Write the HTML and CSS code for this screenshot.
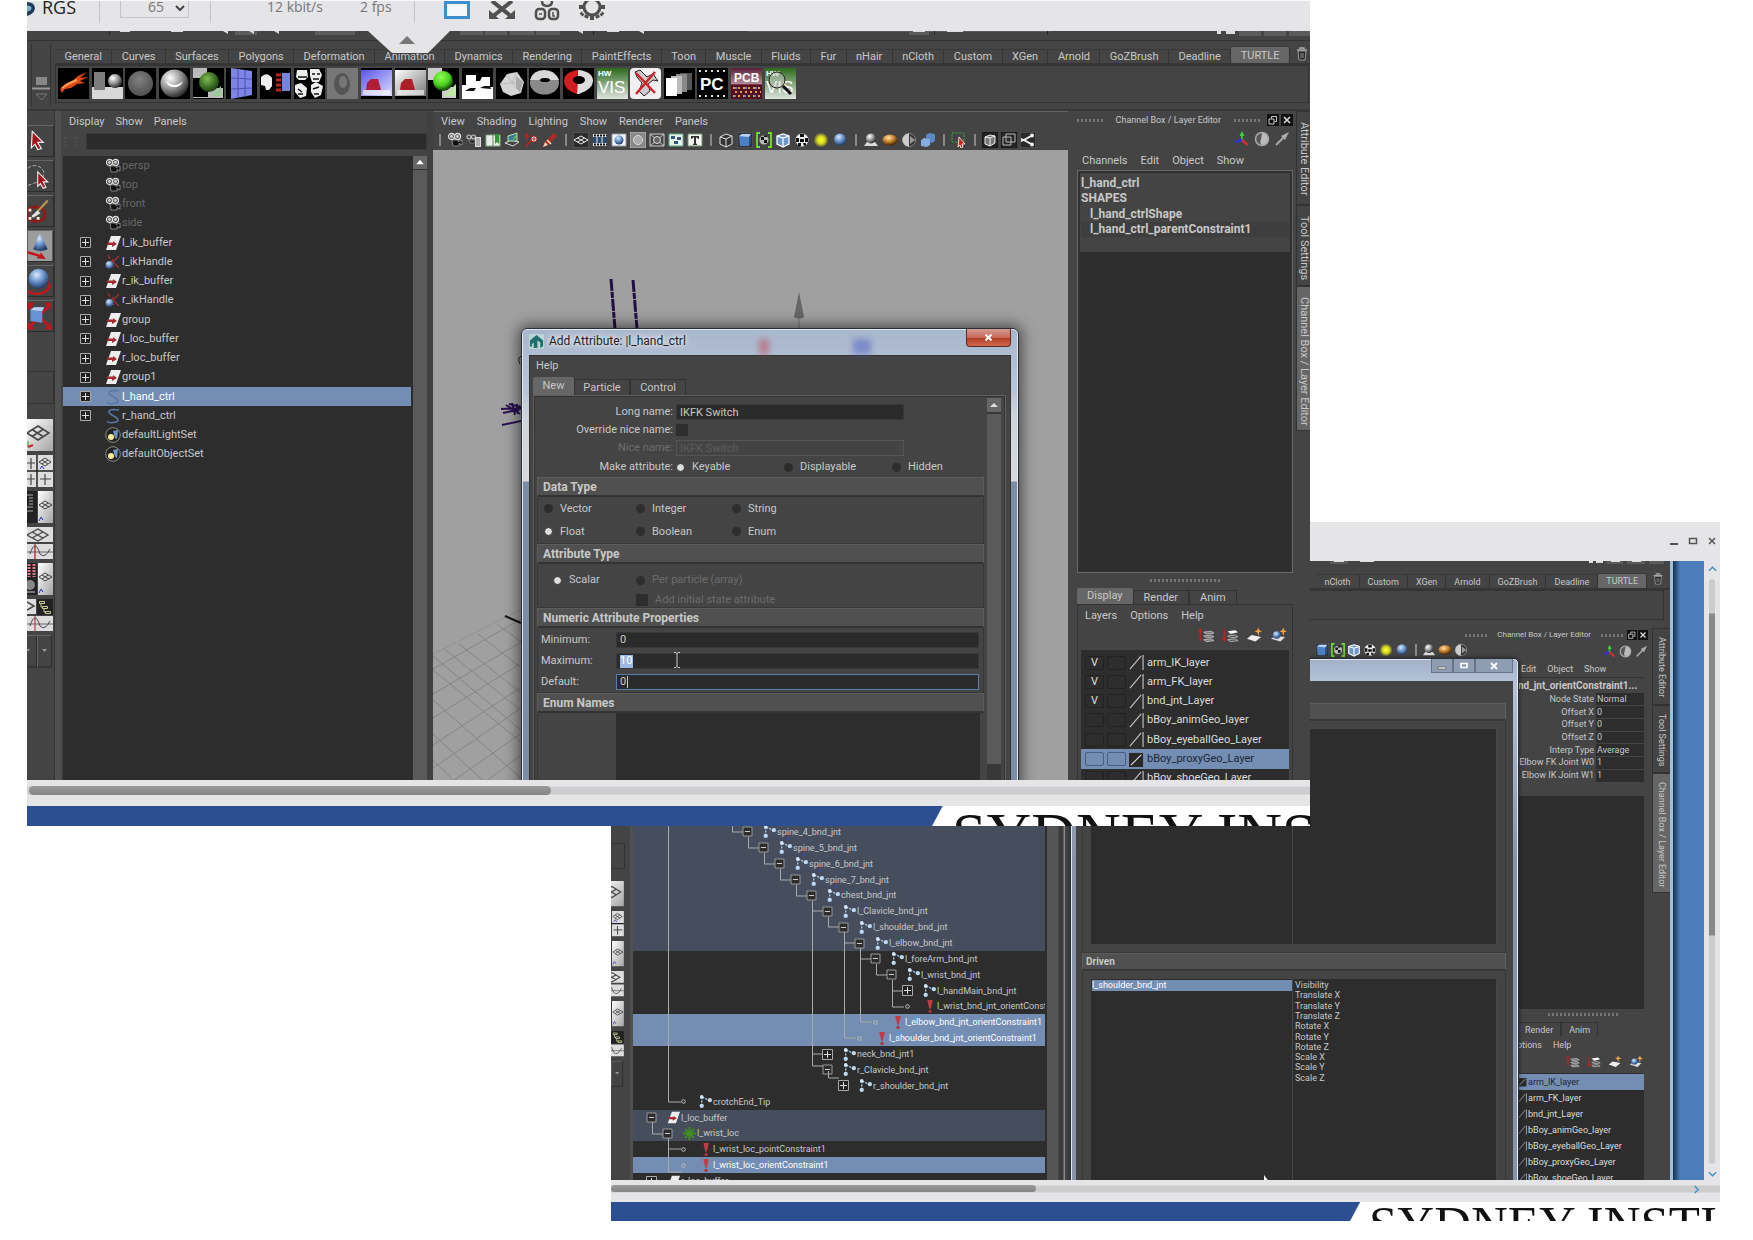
FILE: index.html
```html
<!DOCTYPE html>
<html lang="en">
<head>
<meta charset="utf-8">
<title>Add Attribute and Set Driven Key</title>
<link rel="stylesheet" href="styles.css">
</head>
<body>
<svg class="defs" aria-hidden="true">
<defs>
<radialGradient id="gSteel" cx=".35" cy=".3" r=".75"><stop offset="0" stop-color="#fff"/><stop offset=".5" stop-color="#999"/><stop offset="1" stop-color="#222"/></radialGradient>
<radialGradient id="gBlue" cx=".4" cy=".3" r=".7"><stop offset="0" stop-color="#dbe9fb"/><stop offset=".5" stop-color="#6d96cf"/><stop offset="1" stop-color="#223c66"/></radialGradient>
<radialGradient id="gOrange" cx=".4" cy=".3" r=".7"><stop offset="0" stop-color="#ffe2b0"/><stop offset=".5" stop-color="#c8842c"/><stop offset="1" stop-color="#432503"/></radialGradient>
<radialGradient id="gSun"><stop offset="0" stop-color="#ffff30"/><stop offset=".5" stop-color="#d8d820"/><stop offset="1" stop-color="#d8d820" stop-opacity="0"/></radialGradient>
<radialGradient id="gGreen" cx=".4" cy=".35" r=".7"><stop offset="0" stop-color="#7dbb50"/><stop offset="1" stop-color="#123a08"/></radialGradient>
<radialGradient id="gMatte" cx=".45" cy=".35" r=".7"><stop offset="0" stop-color="#808080"/><stop offset="1" stop-color="#4c4c4c"/></radialGradient>
<radialGradient id="gLime" cx=".4" cy=".3" r=".7"><stop offset="0" stop-color="#8cff50"/><stop offset=".6" stop-color="#4cd020"/><stop offset="1" stop-color="#0c3a04"/></radialGradient>
<linearGradient id="gVis" x2="0" y2="1"><stop offset="0" stop-color="#2c6a1c"/><stop offset="1" stop-color="#e0e4e0"/></linearGradient>
<linearGradient id="gPcb" x2="0" y2="1"><stop offset="0" stop-color="#5a2038"/><stop offset=".5" stop-color="#b08a98"/><stop offset=".55" stop-color="#581020"/><stop offset="1" stop-color="#501020"/></linearGradient>
<linearGradient id="gRoom" x2="1" y2="1"><stop offset="0" stop-color="#fff"/><stop offset="1" stop-color="#777"/></linearGradient>
<linearGradient id="gRoomB" x2="1" y2="1"><stop offset="0" stop-color="#5a55e8"/><stop offset="1" stop-color="#dcdcff"/></linearGradient>
<linearGradient id="gKey" x2="1" y2="1"><stop offset="0" stop-color="#fff"/><stop offset="1" stop-color="#a4a4a4"/></linearGradient>

<symbol id="cam" viewBox="0 0 16 16"><g fill="none" stroke="#ddd" stroke-width="1.300"><circle cx="4.500" cy="4.500" r="3"/><circle cx="10.500" cy="4.500" r="3"/><circle cx="4.500" cy="4.500" r=".8"/><circle cx="10.500" cy="4.500" r=".8"/></g><path d="M5 8h6v1.500l4-1.500v5l-3-1.500v2.500H6z" fill="#111" stroke="#aaa" stroke-width=".7"/></symbol>
<symbol id="camlist" viewBox="0 0 16 16"><g fill="none" stroke="#ccc" stroke-width="1.200"><circle cx="3" cy="5" r="2"/><circle cx="7.500" cy="5" r="2"/></g><path d="M3 8h6v3H4z" fill="#222" stroke="#999" stroke-width=".6"/><path d="M9 5h6v10H9z" fill="#ddd"/><path d="M10 7h4M10 9h4M10 11h4M10 13h4" stroke="#666" stroke-width=".8"/></symbol>
<symbol id="book" viewBox="0 0 16 16"><path d="M1 3h14v11H1z" fill="#e8eee8" stroke="#8a8" /><path d="M8 3v11" stroke="#777"/><path d="M10 2h4v10l-2-2-2 2z" fill="#2e9a2e"/></symbol>
<symbol id="plane" viewBox="0 0 16 16"><path d="M1 11l6-3 8 2-6 4z" fill="none" stroke="#ddd"/><path d="M4 9V4l9-3v8z" fill="#3a7a9a" stroke="#bfe3a4"/><path d="M8 8l4-2V3z" fill="#6c3"/></symbol>
<symbol id="pins" viewBox="0 0 16 16"><path d="M4 1v7M1 4h6M3 15l5-7" stroke="#b22" stroke-width="1.500"/><circle cx="11" cy="7" r="3" fill="#fff" stroke="#a22"/><path d="M9 7h4M11 5v4" stroke="#a22"/></symbol>
<symbol id="pencil" viewBox="0 0 16 16"><path d="M1 15l2-5L12 1l3 3-9 9z" fill="#b02a22"/><path d="M3 10l3 3-5 2z" fill="#eed2b0"/><path d="M5 8l4 4" stroke="#eec" stroke-width="1.500"/></symbol>
<symbol id="gridp" viewBox="0 0 16 16"><path d="M0 0h16v16H0z" fill="#2b2b2b" stroke="#777"/><path d="M1 8l7-4 7 4-7 4zM4.500 6l7 4M11.500 6l-7 4" fill="none" stroke="#eee"/></symbol>
<symbol id="film" viewBox="0 0 16 16"><path d="M1 2h14v12H1z" fill="#dfe6ee"/><path d="M1 5h14v6H1z" fill="#2b4a70"/><path d="M2 3.500h13M2 12.500h13" stroke="#111" stroke-width="2" stroke-dasharray="2 1"/><path d="M5 5v6M10 5v6" stroke="#dfe6ee"/></symbol>
<symbol id="gate" viewBox="0 0 16 16"><path d="M1 2h14v12H1z" fill="#f2f6fa" stroke="#99a"/><circle cx="8" cy="8" r="4.500" fill="url(#gBlue)"/></symbol>
<symbol id="gateg" viewBox="0 0 16 16"><path d="M0 0h16v16H0z" fill="#888" stroke="#bbb"/><circle cx="8" cy="8" r="4.500" fill="#aaa" stroke="#ddd"/></symbol>
<symbol id="xbox" viewBox="0 0 16 16"><path d="M1 2h14v12H1zM1 2l14 12M15 2L1 14" fill="none" stroke="#ccc"/><circle cx="8" cy="8" r="3.500" fill="#666" stroke="#ddd"/></symbol>
<symbol id="dots" viewBox="0 0 16 16"><path d="M1 2h14v12H1z" fill="#e6f0ea" stroke="#6a8"/><path d="M3 4h4v3H3zM9 5h4v3H9zM6 9h4v3H6z" fill="#357"/></symbol>
<symbol id="tbox" viewBox="0 0 16 16"><path d="M1 2h14v12H1z" fill="#f4f6f0" stroke="#797"/><path d="M4 4h8v3h-1l-1-1.500H9v6l1 .5v1H6v-1l1-.5v-6H6L5 7H4z" fill="#333"/></symbol>
<symbol id="cube" viewBox="0 0 16 16"><path d="M2 5l6-3 6 2v8l-6 3-6-3zM2 5l6 2v8M8 7l6-3" fill="#333" stroke="#ddd"/></symbol>
<symbol id="cubeb" viewBox="0 0 16 16"><path d="M0 0h16v16H0z" fill="#333" stroke="#667"/><path d="M2 4l3-2h9l-2 3v9H3z" fill="#4c7fc4"/><path d="M2 4l3-2h9l-2 3z" fill="#b7d1f4"/><path d="M12 5l2-3v9l-2 3z" fill="#28508a"/></symbol>
<symbol id="cubew" viewBox="0 0 16 16"><path d="M2 4l6-2 6 2v8l-6 3-6-3z" fill="#6c96cc" stroke="#fff" stroke-width="1.300"/><path d="M2 4l6 2 6-2M8 6v9" fill="none" stroke="#fff" stroke-width="1.300"/></symbol>
<symbol id="brk" viewBox="0 0 16 16"><path d="M4 1H1v14h3M12 1h3v14h-3" fill="none" stroke="#6fe02c" stroke-width="1.800"/><circle cx="8" cy="8" r="4.500" fill="#bbb"/><path d="M5 5h3v3H5zM8 8h3v3H8zM8 3.500h3V5H8z" fill="#111"/></symbol>
<symbol id="chk" viewBox="0 0 16 16"><circle cx="8" cy="8" r="6.500" fill="#eee"/><path d="M6 2h4v3H6zM2 6h3v4H2zM11 6h3v4h-3zM6 7h4v3H6zM4 11h3v3H4zM9 11h3v2l-2 1z" fill="#111"/></symbol>
<symbol id="sun" viewBox="0 0 16 16"><circle cx="8" cy="8" r="7.500" fill="url(#gSun)"/></symbol>
<symbol id="ball" viewBox="0 0 16 16"><circle cx="8" cy="7.500" r="6" fill="url(#gBlue)"/></symbol>
<symbol id="lamp" viewBox="0 0 16 16"><path d="M1 14l3-4h8l3 4z" fill="#ddd"/><circle cx="8" cy="6.500" r="5" fill="url(#gSteel)"/></symbol>
<symbol id="orng" viewBox="0 0 16 16"><ellipse cx="8" cy="8" rx="7.500" ry="5.500" fill="url(#gOrange)"/></symbol>
<symbol id="half" viewBox="0 0 16 16"><circle cx="8" cy="8" r="6.500" fill="#333" stroke="#888"/><path d="M8 1.500a6.500 6.500 0 0 0 0 13z" fill="#ccc"/><path d="M9 4l5 4-5 4z" fill="#999"/></symbol>
<symbol id="cubes" viewBox="0 0 16 16"><path d="M6 3l3-2 6 1v7l-3 2-6-1z" fill="#5b87c4"/><path d="M1 8l3-2 6 1v6l-3 2-6-1z" fill="#86abdf"/></symbol>
<symbol id="selr" viewBox="0 0 16 16"><path d="M1 1h12v9H1z" fill="none" stroke="#3bb23b" stroke-dasharray="2 1.500"/><path d="M8 5l6 7-3 0 1 3-2 1-1-3-2 2z" fill="#c22" stroke="#fff" stroke-width=".8"/></symbol>
<symbol id="kbox" viewBox="0 0 16 16"><path d="M0 0h16v16H0z" fill="#222" stroke="#111"/><path d="M3 5l5-2 5 1v7l-5 3-5-2zM3 5l5 1v8M8 6l5-2" fill="#777" stroke="#eee"/></symbol>
<symbol id="ksq" viewBox="0 0 16 16"><path d="M0 0h16v16H0z" fill="#262626" stroke="#111"/><path d="M2 5h8v8H2zM5 2h9v8H5z" fill="none" stroke="#bbb"/></symbol>
<symbol id="kcut" viewBox="0 0 16 16"><path d="M0 0h16v16H0z" fill="#2a2a2a" stroke="#666"/><path d="M12 3.500L4 8l8 4.500" stroke="#eee" stroke-width="2" fill="none"/><path d="M1 6l5 2-5 2z" fill="#eee"/><circle cx="12" cy="3.500" r="2" fill="#eee"/><circle cx="12" cy="12.500" r="2" fill="#eee"/></symbol>

<symbol id="axis" viewBox="0 0 16 16"><path d="M8 9V2" stroke="#3b3" stroke-width="2"/><path d="M8 0l2.500 5h-5z" fill="#4c4"/><path d="M8 9L1 11" stroke="#33d" stroke-width="2.500"/><path d="M8 9l6 5" stroke="#c33" stroke-width="2.500"/></symbol>
<symbol id="moon" viewBox="0 0 16 16"><circle cx="8" cy="8" r="6.500" fill="#555" stroke="#aaa" stroke-width="1.500"/><path d="M8 2a6 6 0 0 1 0 12q-3-2-1-6z" fill="#bbb"/></symbol>
<symbol id="arr" viewBox="0 0 16 16"><path d="M2 14L12 4" stroke="#aaa" stroke-width="1.800"/><path d="M15 1L7 5l4 4z" fill="#aaa"/></symbol>
<symbol id="restore" viewBox="0 0 12 12"><path d="M0 0h12v12H0z" fill="#111"/><path d="M2 5h5v5H2zM4.500 4.500v-2h5v5h-2" fill="none" stroke="#ccc"/></symbol>
<symbol id="close" viewBox="0 0 12 12"><path d="M0 0h12v12H0z" fill="#111"/><path d="M3 3l6 6M9 3L3 9" stroke="#ddd" stroke-width="1.500"/></symbol>
<symbol id="trash" viewBox="0 0 14 16"><path d="M2 4h10M5 3V2h4v1" stroke="#aaa" stroke-width="1.500" fill="none"/><path d="M3 5h8l-1 9H4z" fill="#222" stroke="#999"/><path d="M6 7v5M8 7v5" stroke="#999"/></symbol>

<symbol id="grp" viewBox="0 0 16 16"><path d="M6 1h10l-5 14H1z" fill="#eee"/><path d="M2 7.500h6V6l4 3-5 3v-2H2z" fill="#a32a34"/></symbol>
<symbol id="ikh" viewBox="0 0 16 16"><path d="M3 1l2 4M14 2L8 8l6 6" stroke="#a33" stroke-width="1.200" fill="none"/><path d="M8 5l-2 4 3 4" stroke="#c33" fill="none"/><circle cx="4.500" cy="11" r="4" fill="url(#gBlue)"/></symbol>
<symbol id="crv" viewBox="0 0 16 16"><path d="M14 2C4 0 1 4 7 7s8 6 4 7-8 1-9-1" fill="none" stroke="#5878a4" stroke-width="1.500"/></symbol>
<symbol id="set" viewBox="0 0 16 16"><circle cx="8" cy="8" r="7.300" fill="#222" stroke="#8d8d7d"/><path d="M8 4l5-1-1 9-2-1z" fill="#6f95c9"/><circle cx="6" cy="10" r="3" fill="#f5eb9a"/></symbol>
<symbol id="jnt" viewBox="0 0 12 12"><path d="M2.500 2v8M3 2l7 3" stroke="#9fc3e2" stroke-width="1.300" stroke-dasharray="2 1"/><circle cx="2.500" cy="1.800" r="1.700" fill="#d4e8f8"/><circle cx="2.500" cy="10" r="2" fill="#b9daf2"/><circle cx="10" cy="4.800" r="2" fill="#b9daf2"/></symbol>
<symbol id="con" viewBox="0 0 12 12"><path d="M4 0h5L7.200 8H5.800z" fill="#c23a44"/><circle cx="6.500" cy="10.500" r="1.500" fill="#b2303a"/></symbol>
<symbol id="loc" viewBox="0 0 12 12"><path d="M6 0v12M0 6h12M2 2l8 8M10 2l-8 8" stroke="#3f8f1f" stroke-width="1.700"/></symbol>
<symbol id="plus" viewBox="0 0 11 11"><path d="M.5.5h10v10H.5z" fill="#222" stroke="#aaa"/><path d="M2 5.500h7M5.500 2v7" stroke="#ddd"/></symbol>
<symbol id="minus" viewBox="0 0 11 11"><path d="M1 1h9v9H1z" fill="#2d2d2d" stroke="#999"/><path d="M3 5.500h5" stroke="#ccc"/></symbol>
<symbol id="leaf" viewBox="0 0 11 11"><circle cx="5.500" cy="5.500" r="1.800" fill="none" stroke="#bbb"/></symbol>

<symbol id="lup" viewBox="0 0 18 16"><path d="M2.500 14V3M1 5l1.500-3L4 5" stroke="#b22" fill="none" stroke-width="1.500"/><path d="M6 5l8-1 3 2-8 1zM6 9l8-1 3 2-8 1zM6 13l8-1 3 2-8 1z" fill="#777" stroke="#ccc" stroke-width=".8"/></symbol>
<symbol id="ldn" viewBox="0 0 18 16"><path d="M2.500 2v11M1 11l1.500 3L4 11" stroke="#b22" fill="none" stroke-width="1.500"/><path d="M6 4l8-1 3 2-8 2z" fill="#fff"/><path d="M6 9l8-1 3 2-8 1zM6 13l8-1 3 2-8 1z" fill="#555" stroke="#ccc" stroke-width=".8"/></symbol>
<symbol id="lnew" viewBox="0 0 18 16"><path d="M1 12l5-4 10 2-6 5z" fill="#eee"/><path d="M13 0l1 3 3 1-3 1-1 4-1-4-3-1 3-1z" fill="#f2a546"/></symbol>
<symbol id="lsel" viewBox="0 0 18 16"><path d="M1 12l5-3 10 1-5 5z" fill="#ddd"/><circle cx="7" cy="8" r="4" fill="url(#gBlue)"/><path d="M14 0l1 3 3 1-3 1-1 4-1-4-3-1 3-1z" fill="#f2a546"/></symbol>
<symbol id="swatch" viewBox="0 0 16 18"><path d="M1 16L13 2M15 1v16" stroke="#c4c4c4" stroke-width="1.200" fill="none"/></symbol>
<symbol id="swatchon" viewBox="0 0 16 18"><path d="M0 2h15v15H0z" fill="#292929"/><path d="M2 15L13 4" stroke="#ddd" stroke-width="1.200"/></symbol>

<symbol id="tSel" viewBox="0 0 27 33"><path d="M5 6l12 12-6 0 4 7-4 1-3-6-4 4z" fill="#a3121c" stroke="#eee" stroke-width="1.300"/></symbol>
<symbol id="tLas" viewBox="0 0 27 33"><path d="M0 8q8-6 15 0t-4 15l-11 4" fill="none" stroke="#bbb" stroke-dasharray="4 2"/><path d="M11 12l11 11-5 0 3 6-3 1-3-5-3 3z" fill="#a3121c" stroke="#eee" stroke-width="1.200"/></symbol>
<symbol id="tPnt" viewBox="0 0 27 33"><ellipse cx="9" cy="20" rx="10" ry="8" fill="none" stroke="#8f1a1a" stroke-width="3"/><path d="M22 5L9 19" stroke="#b9934a" stroke-width="2.500"/><path d="M11 16l3 3-8 5-2-2z" fill="#e4e4e4"/><path d="M1 14h3v3H1zM1 23h3v3H1zM10 23h3v3h-3z" fill="#fff2d8"/></symbol>
<symbol id="tMov" viewBox="0 0 27 33"><path d="M0 0h27v33H0z" fill="#9c9c9c"/><path d="M13 2l9 18q-8 4-16 0z" fill="url(#gBlue)"/><path d="M0 22l14 4v-3l6 8-10-1 1-2-11-3z" fill="#c4151c"/></symbol>
<symbol id="tRot" viewBox="0 0 27 33"><path d="M20 12q8 12-6 17-7 2-14-3v4q20 6 26-8z" fill="#c4151c"/><circle cx="12" cy="14" r="11" fill="url(#gBlue)"/></symbol>
<symbol id="tScl" viewBox="0 0 27 33"><path d="M0 2h8L0 10zM25 2h-7l7 8zM0 31h8l-8-8zM25 31h-7l7-8z" fill="#c4151c"/><path d="M0 3l26 28M25 3L0 31" stroke="#c4151c" stroke-width="3"/><path d="M3 10l4-3h11l-2 4v13l-13-2z" fill="#6694d4"/><path d="M3 10l4-3h11l-2 4z" fill="#b8d2f5"/></symbol>
<symbol id="vPer" viewBox="0 0 27 33"><path d="M0 0h26v32H0z" fill="url(#gKey)"/><path d="M0 14l11-7 11 7-11 7zM5 10.500l11 7M16 10.500l-11 7" fill="none" stroke="#444" stroke-width="1.500"/><path d="M1 28v-6" stroke="#292"/><path d="M1 28l5-2" stroke="#c22" stroke-width="2"/></symbol>
<symbol id="vFour" viewBox="0 0 27 33"><path d="M0 0h26v32H0z" fill="#ddd"/><path d="M10 0v32M0 16h26" stroke="#222" stroke-width="1.500"/><path d="M13 24h11M18 19v11M0 8h8M4 3v11M0 24h8M4 19v11" stroke="#444" stroke-width="1.200"/><path d="M12 7l6-4 6 4-6 4zM15 5l6 4M21 5l-6 4" fill="none" stroke="#444"/><path d="M13 14l2-3 2 3" stroke="#33b" fill="none"/></symbol>
<symbol id="vOut" viewBox="0 0 27 33"><path d="M0 0h10v32H0z" fill="#222"/><path d="M0 4h6M2 7h4M2 10h4M2 13h4M0 16h6M0 20h6" stroke="#aaa"/><path d="M11 0h15v32H11z" fill="url(#gKey)"/><path d="M12 14l6-4 7 4-7 4zM15 12l7 4M21 12l-6 4" fill="none" stroke="#444"/><path d="M12 30l2-4 2 3" stroke="#33b" fill="none"/></symbol>
<symbol id="vGrf" viewBox="0 0 27 33"><path d="M0 0h26v15H0zM0 17h26v15H0z" fill="#ddd"/><path d="M0 8l11-6 10 6-10 6zM5 5l11 6M16 5L5 11" fill="none" stroke="#444" stroke-width="1.300"/><path d="M0 25h26" stroke="#666"/><path d="M8 17v15" stroke="#b22" stroke-width="1.300"/><path d="M3 27q5-16 10 0 5 5 10-5" fill="none" stroke="#445"/></symbol>
<symbol id="vRen" viewBox="0 0 27 33"><path d="M0 0h10v32H0z" fill="#222"/><path d="M2 1v13M7 1v13" stroke="#d78" stroke-width="3" stroke-dasharray="2 1"/><circle cx="3" cy="22" r="5" fill="#888"/><path d="M0 29h8" stroke="#ccc"/><path d="M11 0h15v32H11z" fill="url(#gKey)"/><path d="M12 14l6-4 7 4-7 4zM15 12l7 4M21 12l-6 4" fill="none" stroke="#444"/><path d="M12 30l2-4 2 3" stroke="#33b" fill="none"/></symbol>
<symbol id="vHyp" viewBox="0 0 27 33"><path d="M0 0h9v15H0zM0 17h26v15H0z" fill="#ddd"/><path d="M10 0h16v16H10z" fill="#222"/><path d="M12.500 2.500h5v2h-5zM15.500 7.500h5v2h-5zM18.500 12.500h5v2h-5zM14 5v3h2M17 10v3h2" fill="none" stroke="#cc9" /><path d="M0 3l7 4-7 4" fill="none" stroke="#444" stroke-width="1.500"/><path d="M0 25h26" stroke="#666"/><path d="M8 17v15" stroke="#b22"/><path d="M3 27q5-16 10 0 5 5 10-5" fill="none" stroke="#445"/></symbol>
<symbol id="vArr" viewBox="0 0 27 33"><path d="M9.500 0v32M24.500 0v32M0 32h25" stroke="#2b2b2b" fill="none"/><path d="M10.500 0v32M0 .5h24" stroke="#666" fill="none"/><path d="M15 14h5l-2.500 3zM0 14h3l-2 3z" fill="#999"/></symbol>
</defs>
</svg>

<main class="canvas">

<!-- Second capture: Set Driven Key -->
<section class="capture rear" aria-label="Set Driven Key session">
  <header class="rear-title">
    <button class="winbtn" aria-label="Minimize"><svg viewBox="0 0 10 10"><path d="M1 8h8" stroke="#555" stroke-width="2"/></svg></button>
    <button class="winbtn" aria-label="Maximize"><svg viewBox="0 0 10 10"><path d="M1.500 2.500h7v5h-7z" fill="none" stroke="#555" stroke-width="1.500"/></svg></button>
    <button class="winbtn" aria-label="Close"><svg viewBox="0 0 10 10"><path d="M2 2l6 6M8 2L2 8" stroke="#555" stroke-width="1.500"/></svg></button>
  </header>
  <div class="rear-body">
    <div class="rear-app">
      <svg class="rear-status" viewBox="0 0 360 7" preserveAspectRatio="xMaxYMin meet"><path d="M20 0h18v3H20zM297 0h16v3h-16zM317 0h18v3h-18zM339 0h15v3h-15z" fill="#5c5c5c"/><path d="M24 0h10v1H24zM50 0h14v1H50zM279 0h4v2h-4zM286 0h7v2h-7zM301 0h9v1h-9zM322 0h9v1h-9z" fill="#ddd"/></svg>
      <div class="rear-shelf">
        <div class="rear-tabs">
          <button>nCloth</button><button>Custom</button><button>XGen</button><button>Arnold</button><button>GoZBrush</button><button>Deadline</button><button class="on">TURTLE</button>
          <svg class="bin"><use href="#trash"/></svg>
        </div>
        <div class="shelf-well"></div>
      </div>
      <div class="rear-main">
        <div class="rear-tools">
          <span class="slot"></span>
          <svg><use href="#vPer"/></svg><svg><use href="#vFour"/></svg><svg><use href="#vOut"/></svg><svg><use href="#vGrf"/></svg><svg><use href="#vRen"/></svg><svg><use href="#vHyp"/></svg><svg><use href="#vArr"/></svg>
        </div>
        <div class="rear-outliner">
          <ul class="tree small">
            <li class="anc l6"><svg class="ex"><use href="#minus"/></svg><svg class="ic"><use href="#jnt"/></svg>spine_4_bnd_jnt</li>
            <li class="anc l7"><svg class="ex"><use href="#minus"/></svg><svg class="ic"><use href="#jnt"/></svg>spine_5_bnd_jnt</li>
            <li class="anc l8"><svg class="ex"><use href="#minus"/></svg><svg class="ic"><use href="#jnt"/></svg>spine_6_bnd_jnt</li>
            <li class="anc l9"><svg class="ex"><use href="#minus"/></svg><svg class="ic"><use href="#jnt"/></svg>spine_7_bnd_jnt</li>
            <li class="anc l10"><svg class="ex"><use href="#minus"/></svg><svg class="ic"><use href="#jnt"/></svg>chest_bnd_jnt</li>
            <li class="anc l11"><svg class="ex"><use href="#minus"/></svg><svg class="ic"><use href="#jnt"/></svg>l_Clavicle_bnd_jnt</li>
            <li class="anc l12"><svg class="ex"><use href="#minus"/></svg><svg class="ic"><use href="#jnt"/></svg>l_shoulder_bnd_jnt</li>
            <li class="anc l13"><svg class="ex"><use href="#minus"/></svg><svg class="ic"><use href="#jnt"/></svg>l_elbow_bnd_jnt</li>
            <li class="l14"><svg class="ex"><use href="#minus"/></svg><svg class="ic"><use href="#jnt"/></svg>l_foreArm_bnd_jnt</li>
            <li class="l15"><svg class="ex"><use href="#minus"/></svg><svg class="ic"><use href="#jnt"/></svg>l_wrist_bnd_jnt</li>
            <li class="l16"><svg class="ex"><use href="#plus"/></svg><svg class="ic"><use href="#jnt"/></svg>l_handMain_bnd_jnt</li>
            <li class="l16"><svg class="ex"><use href="#leaf"/></svg><svg class="ic"><use href="#con"/></svg>l_wrist_bnd_jnt_orientConst</li>
            <li class="sel l14"><svg class="ex"><use href="#leaf"/></svg><svg class="ic"><use href="#con"/></svg>l_elbow_bnd_jnt_orientConstraint1</li>
            <li class="sel l13"><svg class="ex"><use href="#leaf"/></svg><svg class="ic"><use href="#con"/></svg>l_shoulder_bnd_jnt_orientConstraint1</li>
            <li class="l11"><svg class="ex"><use href="#plus"/></svg><svg class="ic"><use href="#jnt"/></svg>neck_bnd_jnt1</li>
            <li class="l11"><svg class="ex"><use href="#minus"/></svg><svg class="ic"><use href="#jnt"/></svg>r_Clavicle_bnd_jnt</li>
            <li class="l12"><svg class="ex"><use href="#plus"/></svg><svg class="ic"><use href="#jnt"/></svg>r_shoulder_bnd_jnt</li>
            <li class="l2"><svg class="ex"><use href="#leaf"/></svg><svg class="ic"><use href="#jnt"/></svg>crotchEnd_Tip</li>
            <li class="anc l0"><svg class="ex"><use href="#minus"/></svg><svg class="ic"><use href="#grp"/></svg>l_loc_buffer</li>
            <li class="anc l1"><svg class="ex"><use href="#minus"/></svg><svg class="ic"><use href="#loc"/></svg>l_wrist_loc</li>
            <li class="l2"><svg class="ex"><use href="#leaf"/></svg><svg class="ic"><use href="#con"/></svg>l_wrist_loc_pointConstraint1</li>
            <li class="sel l2"><svg class="ex"><use href="#leaf"/></svg><svg class="ic"><use href="#con"/></svg>l_wrist_loc_orientConstraint1</li>
            <li class="l0"><svg class="ex"><use href="#plus"/></svg><svg class="ic"><use href="#grp"/></svg>r_loc_buffer</li>
          </ul>
          <svg class="guides" viewBox="0 0 412 365"><g fill="none" stroke="#aaa"><path d="M35.500 0v278H48M99.500 0v8H110M115.500 13v11H126M131.500 29v11H142M147.500 45v11H158M163.500 61v11H174M179.500 77v165H190M179.500 87H190M179.500 230H190M195.500 93v10H206M211.500 108v106H223M211.500 119H222M227.500 124v74H239M227.500 135H238M243.500 140v11H254M259.500 156v27H271M259.500 167H270M195.500 247v7H206M19.500 298v12H30M35.500 314v34H48M35.500 325H48"/></g></svg>
        </div>
        <div class="rear-scroll"></div>
        <div class="rear-view">
          <div class="iconrow mini">
            <svg><use href="#cubeb"/></svg><svg><use href="#brk"/></svg><svg><use href="#cubew"/></svg><svg><use href="#chk"/></svg><svg><use href="#sun"/></svg><svg><use href="#ball"/></svg><i class="sep"></i><svg><use href="#lamp"/></svg><svg><use href="#orng"/></svg><svg><use href="#half"/></svg>
          </div>
        </div>
        <aside class="rear-channel">
          <div class="dock"><span class="grip"></span>Channel Box / Layer Editor<span class="grip"></span><svg><use href="#restore"/></svg><svg><use href="#close"/></svg></div>
          <div class="modes"><svg><use href="#axis"/></svg><svg><use href="#moon"/></svg><svg><use href="#arr"/></svg></div>
          <nav class="menu"><a href="#edit">Edit</a><a href="#object">Object</a><a href="#show">Show</a></nav>
          <div class="chan-box">
            <h3>nd_jnt_orientConstraint1...</h3>
            <table>
              <tr><th scope="row">Node State</th><td>Normal</td></tr>
              <tr><th scope="row">Offset X</th><td>0</td></tr>
              <tr><th scope="row">Offset Y</th><td>0</td></tr>
              <tr><th scope="row">Offset Z</th><td>0</td></tr>
              <tr><th scope="row">Interp Type</th><td>Average</td></tr>
              <tr><th scope="row">. Elbow FK Joint W0</th><td>1</td></tr>
              <tr><th scope="row">. Elbow IK Joint W1</th><td>1</td></tr>
            </table>
          </div>
          <div class="divider"><span class="grip"></span></div>
          <div class="ltabs"><button>Render</button><button>Anim</button></div>
          <nav class="menu layers-menu"><a href="#options">ptions</a><a href="#help">Help</a></nav>
          <div class="ltools"><svg><use href="#lup"/></svg><svg><use href="#ldn"/></svg><svg><use href="#lnew"/></svg><svg><use href="#lsel"/></svg></div>
          <ul class="rear-layers">
            <li class="sel"><svg><use href="#swatchon"/></svg>arm_IK_layer</li>
            <li><svg><use href="#swatch"/></svg>arm_FK_layer</li>
            <li><svg><use href="#swatch"/></svg>bnd_jnt_Layer</li>
            <li><svg><use href="#swatch"/></svg>bBoy_animGeo_layer</li>
            <li><svg><use href="#swatch"/></svg>bBoy_eyeballGeo_Layer</li>
            <li><svg><use href="#swatch"/></svg>bBoy_proxyGeo_Layer</li>
            <li><svg><use href="#swatch"/></svg>bBoy_shoeGeo_Layer</li>
          </ul>
        </aside>
        <div class="vtabs"><button>Attribute Editor</button><button>Tool Settings</button><button class="on">Channel Box / Layer Editor</button></div>
      </div>
      <div class="driven-window">
        <div class="driven-title">
          <button aria-label="Minimize"><svg viewBox="0 0 12 10"><path d="M2 6h8v2H2z" fill="#fff" stroke="#555" stroke-width=".7"/></svg></button>
          <button aria-label="Maximize"><svg viewBox="0 0 12 10"><path d="M3 2.500h6v4H3z" fill="none" stroke="#fff" stroke-width="1.700"/></svg></button>
          <button class="wide" aria-label="Close"><svg viewBox="0 0 12 10"><path d="M3 2l6 6M9 2L3 8" stroke="#fff" stroke-width="1.800"/></svg></button>
        </div>
        <div class="driven-body">
          <div class="bar"></div>
          <div class="pair driver"><div></div><div></div></div>
          <h2 class="bar">Driven</h2>
          <div class="pair driven">
            <ul><li class="sel">l_shoulder_bnd_jnt</li></ul>
            <ul class="attrs"><li>Visibility</li><li>Translate X</li><li>Translate Y</li><li>Translate Z</li><li>Rotate X</li><li>Rotate Y</li><li>Rotate Z</li><li>Scale X</li><li>Scale Y</li><li>Scale Z</li></ul>
          </div>
        </div>
        <svg class="pointer" viewBox="0 0 8 8"><path d="M1 0l6 8H1z" fill="#fff"/></svg>
      </div>
    </div>
    <div class="desk"></div>
    <div class="vscroll"><svg viewBox="0 0 10 8"><path d="M1 6l4-4 4 4" fill="none" stroke="#3b8fc4" stroke-width="1.500"/></svg><span></span><svg viewBox="0 0 10 8"><path d="M1 2l4 4 4-4" fill="none" stroke="#3b8fc4" stroke-width="1.500"/></svg></div>
  </div>
  <div class="hscroll"><span></span><svg viewBox="0 0 8 10"><path d="M2 1l4 4-4 4" fill="none" stroke="#3b8fc4" stroke-width="1.500"/></svg></div>
  <div class="banner"><span>SYDNEY INSTI</span></div>
</section>

<!-- First capture: Add Attribute -->
<section class="capture front" aria-label="Add Attribute session">
  <header class="rgs">
    <svg class="logo" viewBox="0 0 10 18"><path d="M0 1q8 0 9 7-1 7-9 9z" fill="#1c3c58"/><path d="M0 5q5 0 5 3t-5 4z" fill="#7fb4d4"/></svg>
    <strong>RGS</strong><i></i>
    <select aria-label="Quality"><option>65</option></select><i class="b"></i>
    <span class="rate">12 kbit/s</span><span class="fps">2 fps</span><i class="c"></i>
    <button aria-label="Window"><svg viewBox="0 0 26 20"><path d="M1.500 0v16.500h23V0" fill="#f4f8fb" stroke="#3b8fcb" stroke-width="3"/><path d="M1 1.500h24" stroke="#3b8fcb" stroke-width="3"/></svg></button>
    <button aria-label="Fit"><svg viewBox="0 0 26 20"><path d="M3 0l20 16M23 0L3 16" stroke="#505050" stroke-width="4"/><path d="M0 9v9h10zM26 9v9H16z" fill="#505050"/></svg></button>
    <button aria-label="Keys"><svg viewBox="0 0 26 20"><g fill="none" stroke="#505050" stroke-width="2.500"><path d="M8 0q0 5 5 5t5-5"/><rect x="2" y="8" width="9" height="10" rx="3"/><rect x="15" y="8" width="9" height="10" rx="3"/></g><path d="M5 13h3M19 11v4h2" stroke="#505050" stroke-width="1.500" fill="none"/></svg></button>
    <button aria-label="Settings"><svg viewBox="0 0 26 20"><circle cx="13" cy="6" r="8" fill="none" stroke="#505050" stroke-width="3"/><path d="M13 15v4M4 12l-2 2M22 12l2 2M0 6h4M22 6h4M8 14l-1 3M18 14l1 3" stroke="#505050" stroke-width="4"/></svg></button>
  </header>
  <svg class="flap" viewBox="0 0 82 22"><path d="M0 0h82L60 22H24z" fill="#e5e5e8"/><path d="M31 13l8-8 8 8z" fill="#777"/></svg>

  <div class="app">
    <svg class="status" viewBox="0 0 1283 13" preserveAspectRatio="xMinYMin slice"><g fill="#5c5c5c"><path d="M208 0h22v4h-22zM288 0h40v4h-40zM433 0h23v4h-23zM458 0h22v4h-22zM483 0h24v4h-24zM509 0h24v4h-24zM722 0h300v1H722zM882 0h20v4h-20zM1212 0h22v5h-22zM1237 0h22v5h-22zM1262 0h21v5h-21z"/></g><g fill="#ddd"><path d="M93 0h10v1H93zM144 0h12v1h-12zM196 0l5 3V0zM222 0l5 3V0zM247 0l5 3V0zM551 0l5 3V0zM580 0h12v1h-12zM612 0l5 3V0zM886 0h12v1h-12zM920 0h16v1h-16zM1190 0h4v3h-4zM1199 0h9v3h-9z"/></g><path d="M82.500 0v4M566.500 0v4M907.500 0v4M1020.500 0v4" stroke="#222"/><path d="M0 9.500h1283" stroke="#333"/></svg>

    <div class="shelf">
      <div class="shelf-side"><svg viewBox="0 0 20 62"><path d="M.5 0v62M19.500 0v62" stroke="#333"/><path d="M5 33h11v8H5z" fill="#888"/><path d="M1 44.500h18" stroke="#999" stroke-width="2"/><path d="M5 50h11l-5.500 6z" fill="none" stroke="#777"/></svg></div>
      <div class="shelf-main">
        <div class="shelf-tabs">
          <button>General</button><button>Curves</button><button>Surfaces</button><button>Polygons</button><button>Deformation</button><button>Animation</button><button>Dynamics</button><button>Rendering</button><button>PaintEffects</button><button>Toon</button><button>Muscle</button><button>Fluids</button><button>Fur</button><button>nHair</button><button>nCloth</button><button>Custom</button><button>XGen</button><button>Arnold</button><button>GoZBrush</button><button>Deadline</button><button class="on">TURTLE</button>
          <svg class="bin"><use href="#trash"/></svg>
        </div>
        <div class="shelf-box">
          <div class="shelf-icons">
            <svg viewBox="0 0 31 31"><path d="M0 0h31v31H0z"/><path d="M2 21l5-5 7-3 6-5 9-4-7 6 8-1-8 4 5 2-8 1-6 4-6 1-3 4z" fill="#e0481a"/><path d="M4 20l8-5 7-3" stroke="#ffa050" stroke-width="2" fill="none"/></svg>
            <svg viewBox="0 0 31 31"><path d="M0 0h31v31H0z"/><path d="M0 19h31v12H0z" fill="#d8d8d8"/><path d="M2 4h11v18H2z" fill="#7d7d7d"/><circle cx="23" cy="13" r="7" fill="url(#gSteel)"/></svg>
            <svg viewBox="0 0 31 31"><path d="M0 0h31v31H0z"/><circle cx="15.500" cy="15.500" r="12.500" fill="url(#gMatte)"/></svg>
            <svg viewBox="0 0 31 31"><path d="M0 0h31v31H0z"/><circle cx="15.500" cy="15.500" r="14" fill="url(#gSteel)"/><path d="M7 13q9 8 17 0-2 6-9 6-6 0-8-6z" fill="#fff"/></svg>
            <svg viewBox="0 0 31 31"><path d="M0 0h31v31H0z"/><path d="M0 0h14v10H0zM15 20h15v10H15zM0 29h30v1H0z" fill="#bbb"/><circle cx="16" cy="14" r="10" fill="url(#gGreen)"/><path d="M28 18v10H18z" fill="#9c9"/></svg>
            <svg viewBox="0 0 31 31"><path d="M0 0h31v31H0z"/><path d="M5 0l21 3v24L5 31z" fill="#7d84e4"/><path d="M12 1v29M19 2v27M5 10l21 1M5 21l21-1" stroke="#4d51b4"/></svg>
            <svg viewBox="0 0 31 31"><path d="M0 0h31v31H0z"/><path d="M1 9q6-6 11 1v8l-3 4H6l-1-4-4-1z" fill="#eee"/><path d="M16 7h5M16 12h5M16 17h5M16 22h5" stroke="#b22" stroke-width="3"/><path d="M22 5h8v18h-8z" fill="#7684dd"/></svg>
            <svg viewBox="0 0 31 31"><path d="M0 0h31v31H0z"/><g fill="#eee"><path d="M3 2h10l1 7-3 3H5L2 9zM16 1h9l3 6-3 7h-7l-2-6zM1 17l6-2 6 5-1 8-6 2-5-6zM17 17l5-3 7 4-2 9-6 3-4-6z"/></g><path d="M4 9h9M18 6h3M23 6h3M4 21l4 3M19 21l6-2M20 26h5M4 26h5M19 11h6" stroke="#111" stroke-width="1.500"/></svg>
            <svg viewBox="0 0 31 31"><path d="M0 0h31v31H0z" fill="#777"/><ellipse cx="15" cy="16" rx="8" ry="11" fill="#555"/><ellipse cx="16" cy="14" rx="4" ry="6" fill="#777"/></svg>
            <svg viewBox="0 0 31 31"><path d="M0 0h31v31H0z"/><path d="M0 2h31v26H0z" fill="url(#gRoomB)"/><path d="M5 22l1-7 4-4h7l3 11z" fill="#ae1e38"/><path d="M2 22h27v5H2z" fill="#fff" opacity=".6"/></svg>
            <svg viewBox="0 0 31 31"><path d="M0 0h31v31H0z"/><path d="M0 2h31v26H0z" fill="url(#gRoom)"/><path d="M5 22l1-7 4-4h7l3 11z" fill="#ae1e28"/><path d="M2 22h27v5H2z" fill="#fff" opacity=".6"/></svg>
            <svg viewBox="0 0 31 31"><path d="M0 0h31v31H0z"/><path d="M0 0h14v12H0zM14 19h14v11H14z" fill="#ccc"/><circle cx="15" cy="13" r="10" fill="url(#gLime)"/><path d="M28 16v12H16z" fill="#bfe8a8"/></svg>
            <svg viewBox="0 0 31 31"><path d="M0 0h31v31H0z"/><path d="M0 17h4V7h10v6h4l2-4h8v10h3v12H0z" fill="#fff"/><path d="M3 23l5-3h6l-2 3zM18 20l4-2h6l1 3z" fill="#111"/></svg>
            <svg viewBox="0 0 31 31"><path d="M0 0h31v31H0z"/><path d="M4 16L11 6l10-2 7 10-3 11-10 3-8-4z" fill="#d4d4d4"/><path d="M11 6l5 9 5-11M4 16l12-1 9 10M16 15l12-1" stroke="#bbb" fill="none"/><path d="M20 8l7 6-3 10-4-4z" fill="#aaa"/></svg>
            <svg viewBox="0 0 31 31"><path d="M0 0h31v31H0z"/><ellipse cx="15.500" cy="15" rx="14.500" ry="11.500" fill="#8a8a8a"/><path d="M1 12q3-10 14-10t15 10z" fill="#d8d8d8"/><ellipse cx="16" cy="12" rx="5" ry="2"/></svg>
            <svg viewBox="0 0 31 31"><path d="M0 0h31v31H0z"/><path d="M15 2h1q14 2 14 11 0 8-14 13h-2z" fill="#ddd"/><path d="M15 2Q1 4 1 13t13 13z" fill="#d11c20"/><ellipse cx="16" cy="12" rx="6" ry="4"/></svg>
            <svg viewBox="0 0 31 31"><path d="M0 0h31v31H0z" fill="url(#gVis)"/><text x="1" y="8" class="t8">HW</text><text x="1" y="25" class="t17">VIS</text></svg>
            <svg viewBox="0 0 31 31"><rect width="31" height="31" rx="4" fill="#f0f0f0"/><path d="M5 4l5-2 7 7 6-3 5 7-5-1-5 4 2 7-6 5-5-5 3-8-5-6z" fill="#ccc" stroke="#222"/><path d="M6 5l19 20M25 4L6 26" stroke="#d3222a" stroke-width="2.500"/></svg>
            <svg viewBox="0 0 31 31"><path d="M0 0h31v31H0z"/><path d="M16 5h12v17H16z" fill="#555"/><path d="M12 6h11v18H12z" fill="#888"/><path d="M7 8h11v18H7z" fill="#bbb"/><path d="M2 10h11v18H2z" fill="#fff"/></svg>
            <svg viewBox="0 0 31 31"><path d="M0 0h31v31H0z"/><text x="3" y="22" class="t17 b">PC</text><path d="M2 3h28M2 28h28" stroke="#ddd" stroke-width="2" stroke-dasharray="2 4"/></svg>
            <svg viewBox="0 0 31 31"><path d="M0 0h31v31H0z" fill="url(#gPcb)"/><text x="3" y="14" class="t12 b">PCB</text><path d="M2 20h28M4 24h26M2 28h28" stroke="#d9a548" stroke-width="2" stroke-dasharray="2 3"/><path d="M4 20h28M3 28h26" stroke="#68c" stroke-width="2" stroke-dasharray="2 8"/></svg>
            <svg viewBox="0 0 31 31"><path d="M0 0h31v31H0z" fill="url(#gVis)"/><text x="1" y="8" class="t8">HW</text><text x="1" y="25" class="t17">VIS</text><circle cx="12" cy="12" r="8" fill="#ccc" fill-opacity=".5" stroke="#222"/><path d="M18 18l8 8" stroke="#111" stroke-width="3"/></svg>
          </div>
        </div>
      </div>
    </div>

    <div class="work">
      <div class="tools">
        <svg><use href="#tSel"/></svg><svg><use href="#tLas"/></svg><svg><use href="#tPnt"/></svg><svg><use href="#tMov"/></svg><svg><use href="#tRot"/></svg><svg><use href="#tScl"/></svg>
        <span class="slot"></span>
        <svg class="v"><use href="#vPer"/></svg><svg class="v"><use href="#vFour"/></svg><svg class="v"><use href="#vOut"/></svg><svg class="v"><use href="#vGrf"/></svg><svg class="v"><use href="#vRen"/></svg><svg class="v"><use href="#vHyp"/></svg><svg class="v"><use href="#vArr"/></svg>
      </div>
      <div class="outliner">
        <nav class="menu"><a href="#display">Display</a><a href="#show2">Show</a><a href="#panels">Panels</a></nav>
        <div class="filter"><svg viewBox="0 0 16 16"><path d="M2 4v9M2 4h3M2 13h3M13 4v9M13 4h-3M13 13h-3" fill="none" stroke="#555" stroke-dasharray="2 2"/></svg><input type="text" aria-label="Filter"></div>
        <div class="treewrap">
          <ul class="tree">
            <li class="dim"><span class="ex"></span><svg class="ic"><use href="#cam"/></svg>persp</li>
            <li class="dim"><span class="ex"></span><svg class="ic"><use href="#cam"/></svg>top</li>
            <li class="dim"><span class="ex"></span><svg class="ic"><use href="#cam"/></svg>front</li>
            <li class="dim"><span class="ex"></span><svg class="ic"><use href="#cam"/></svg>side</li>
            <li><svg class="ex"><use href="#plus"/></svg><svg class="ic"><use href="#grp"/></svg>l_ik_buffer</li>
            <li><svg class="ex"><use href="#plus"/></svg><svg class="ic"><use href="#ikh"/></svg>l_ikHandle</li>
            <li><svg class="ex"><use href="#plus"/></svg><svg class="ic"><use href="#grp"/></svg>r_ik_buffer</li>
            <li><svg class="ex"><use href="#plus"/></svg><svg class="ic"><use href="#ikh"/></svg>r_ikHandle</li>
            <li><svg class="ex"><use href="#plus"/></svg><svg class="ic"><use href="#grp"/></svg>group</li>
            <li><svg class="ex"><use href="#plus"/></svg><svg class="ic"><use href="#grp"/></svg>l_loc_buffer</li>
            <li><svg class="ex"><use href="#plus"/></svg><svg class="ic"><use href="#grp"/></svg>r_loc_buffer</li>
            <li><svg class="ex"><use href="#plus"/></svg><svg class="ic"><use href="#grp"/></svg>group1</li>
            <li class="sel"><svg class="ex"><use href="#plus"/></svg><svg class="ic"><use href="#crv"/></svg>l_hand_ctrl</li>
            <li><svg class="ex"><use href="#plus"/></svg><svg class="ic"><use href="#crv"/></svg>r_hand_ctrl</li>
            <li><span class="ex"></span><svg class="ic"><use href="#set"/></svg>defaultLightSet</li>
            <li><span class="ex"></span><svg class="ic"><use href="#set"/></svg>defaultObjectSet</li>
          </ul>
          <div class="vbar"><svg viewBox="0 0 14 14"><path d="M3 9h8L7 4z" fill="#fff"/></svg></div>
        </div>
      </div>
      <div class="view">
        <nav class="menu"><a href="#view">View</a><a href="#shading">Shading</a><a href="#lighting">Lighting</a><a href="#show3">Show</a><a href="#renderer">Renderer</a><a href="#panels2">Panels</a></nav>
        <div class="iconrow">
          <i class="sep"></i><svg><use href="#cam"/></svg><svg><use href="#camlist"/></svg><svg><use href="#book"/></svg><svg><use href="#plane"/></svg><svg><use href="#pins"/></svg><svg><use href="#pencil"/></svg><i class="sep"></i><svg><use href="#gridp"/></svg><svg><use href="#film"/></svg><svg><use href="#gate"/></svg><svg><use href="#gateg"/></svg><svg><use href="#xbox"/></svg><svg><use href="#dots"/></svg><svg><use href="#tbox"/></svg><i class="sep"></i><svg><use href="#cube"/></svg><svg><use href="#cubeb"/></svg><svg><use href="#brk"/></svg><svg><use href="#cubew"/></svg><svg><use href="#chk"/></svg><svg><use href="#sun"/></svg><svg><use href="#ball"/></svg><i class="sep"></i><svg><use href="#lamp"/></svg><svg><use href="#orng"/></svg><svg><use href="#half"/></svg><svg><use href="#cubes"/></svg><i class="sep"></i><svg><use href="#selr"/></svg><i class="sep"></i><svg><use href="#kbox"/></svg><svg><use href="#ksq"/></svg><svg><use href="#kcut"/></svg>
        </div>
        <div class="scene">
          <svg viewBox="0 0 635 630" preserveAspectRatio="xMinYMin slice">
            <defs><clipPath id="floor"><path d="M0 504L90 458V630H0z"/></clipPath></defs>
            <g clip-path="url(#floor)" stroke="#858585" fill="none"><path d="M0 504L90 458M0 519L90 468M0 544L90 491M0 568L90 512M0 595L90 536M0 618L90 557M0 645L90 582M0 670L90 604M0 700L90 630"/><path d="M0 520L110 610M0 550L90 630M0 584L60 640M0 610L30 640M0 490L120 586M0 506L90 582M26 494L110 560M45 484L110 535M64 474L110 508"/></g>
            <path d="M72 466l16 7" stroke="#111" stroke-width="2"/>
            <g stroke="#241043" stroke-width="3" fill="none" stroke-dasharray="12 1 6 1"><path d="M178 129l4 50M200 130l4 49"/></g>
            <path d="M68 259l20-1M70 263l18-4M76 254l12 3M73 255l14 9M79 253l3 12M84 254l1 10M69 275l19-4" stroke="#2a1250" stroke-width="2" fill="none"/><path d="M88 206q-4 2-1 8" stroke="#222" fill="none"/>
            <path d="M366 165v14" stroke="#777"/><path d="M366 142l5 25q-5 3-10 0z" fill="#666"/>
          </svg>
        </div>
      </div>
      <aside class="channel">
        <div class="dock"><span class="grip"></span>Channel Box / Layer Editor<span class="grip"></span><svg><use href="#restore"/></svg><svg><use href="#close"/></svg></div>
        <div class="modes"><svg><use href="#axis"/></svg><svg><use href="#moon"/></svg><svg><use href="#arr"/></svg></div>
        <nav class="menu"><a href="#channels">Channels</a><a href="#edit2">Edit</a><a href="#object2">Object</a><a href="#show4">Show</a></nav>
        <div class="attrs-box"><ul><li>l_hand_ctrl</li><li>SHAPES</li><li class="in">l_hand_ctrlShape</li><li class="in hl">l_hand_ctrl_parentConstraint1</li></ul></div>
        <div class="divider"><span class="grip"></span></div>
        <div class="ltabs"><button class="on">Display</button><button>Render</button><button>Anim</button></div>
        <div class="lpanel">
          <nav class="menu"><a href="#layers">Layers</a><a href="#options2">Options</a><a href="#help2">Help</a></nav>
          <div class="ltools"><svg><use href="#lup"/></svg><svg><use href="#ldn"/></svg><svg><use href="#lnew"/></svg><svg><use href="#lsel"/></svg></div>
          <ul class="layers">
            <li><button>V</button><button aria-label="Type"></button><svg><use href="#swatch"/></svg>arm_IK_layer</li>
            <li><button>V</button><button aria-label="Type"></button><svg><use href="#swatch"/></svg>arm_FK_layer</li>
            <li><button>V</button><button aria-label="Type"></button><svg><use href="#swatch"/></svg>bnd_jnt_Layer</li>
            <li><button aria-label="Visible"></button><button aria-label="Type"></button><svg><use href="#swatch"/></svg>bBoy_animGeo_layer</li>
            <li><button aria-label="Visible"></button><button aria-label="Type"></button><svg><use href="#swatch"/></svg>bBoy_eyeballGeo_Layer</li>
            <li class="sel"><button aria-label="Visible"></button><button aria-label="Type"></button><svg><use href="#swatchon"/></svg>bBoy_proxyGeo_Layer</li>
            <li><button aria-label="Visible"></button><button aria-label="Type"></button><svg><use href="#swatch"/></svg>bBoy_shoeGeo_Layer</li>
          </ul>
        </div>
      </aside>
      <div class="vtabs"><button>Attribute Editor</button><button>Tool Settings</button><button class="on">Channel Box / Layer Editor</button></div>
    </div>

    <div class="dialog" role="dialog" aria-label="Add Attribute">
      <div class="dialog-title">
        <svg viewBox="0 0 16 16"><path d="M0 0h16v16H0z" fill="#b8d8d8"/><path d="M1 7l7-6 7 6v6l-3 2V9L9 7v8H5V9l-2 2v3l-2-1z" fill="#1f6f6f"/></svg>
        <span>Add Attribute: |l_hand_ctrl</span>
        <b class="smear r"></b><b class="smear"></b>
        <button aria-label="Close"><svg viewBox="0 0 12 12"><path d="M2 2l8 8M10 2L2 10" stroke="#fff" stroke-width="2.500"/></svg></button>
      </div>
      <div class="dialog-body">
        <nav class="menu"><a href="#help3">Help</a></nav>
        <div class="dtabs"><button class="on">New</button><button>Particle</button><button>Control</button></div>
        <div class="dpanel">
          <form class="form">
            <div class="names">
              <label for="ln">Long name:</label><input id="ln" type="text" value="IKFK Switch">
              <label for="on">Override nice name:</label><input id="on" type="checkbox">
              <label for="nn" class="off">Nice name:</label><input id="nn" type="text" value="IKFK Switch" disabled>
              <span>Make attribute:</span>
              <div class="make"><label><input type="radio" name="mk" checked>Keyable</label><label><input type="radio" name="mk">Displayable</label><label><input type="radio" name="mk">Hidden</label></div>
            </div>
            <h2>Data Type</h2>
            <div class="types"><label><input type="radio" name="dt">Vector</label><label><input type="radio" name="dt">Integer</label><label><input type="radio" name="dt">String</label><label><input type="radio" name="dt" checked>Float</label><label><input type="radio" name="dt">Boolean</label><label><input type="radio" name="dt">Enum</label></div>
            <h2>Attribute Type</h2>
            <div class="attrtype"><label class="sc"><input type="radio" name="at" checked>Scalar</label><label class="off"><input type="radio" name="at" disabled>Per particle (array)</label><label class="off init"><input type="checkbox" disabled>Add initial state attribute</label></div>
            <h2>Numeric Attribute Properties</h2>
            <div class="nums"><label for="mi">Minimum:</label><input id="mi" type="text" value="0"><label for="ma">Maximum:</label><input id="ma" class="marked" type="text" value="10"><label for="de">Default:</label><input id="de" class="active" type="text" value="0"></div>
            <h2>Enum Names</h2>
            <div class="enum"><textarea aria-label="Enum Names"></textarea></div>
            <svg class="ibeam" viewBox="0 0 8 16"><path d="M1 .5h2l1 1 1-1h2M4 1v14M1 15.500h2l1-1 1 1h2" fill="none" stroke="#ccc"/></svg>
          </form>
          <div class="dbar"><svg viewBox="0 0 14 14"><path d="M3 9h8L7 5z" fill="#ddd"/></svg><span></span></div>
        </div>
      </div>
    </div>
  </div>

  <div class="hscroll"><span></span></div>
  <div class="banner"><span>SYDNEY INS</span></div>
</section>
</main>
</body>
</html>
```
FILE: styles.css
```css
* { box-sizing: border-box; }
body { margin: 0; background: #fff; font: 11px/14px Roboto, "Noto Sans", sans-serif; color: #c8c8c8; }
button, input, select, textarea { font: inherit; color: inherit; margin: 0; padding: 0; border: 0; background: none; border-radius: 0; }
ul { list-style: none; margin: 0; padding: 0; }
h2, h3 { margin: 0; font-size: inherit; }
a { color: inherit; text-decoration: none; }
svg { display: block; flex: none; }
.defs { position: absolute; width: 0; height: 0; }
.canvas { position: relative; min-height: 100vh; overflow: hidden; }
.capture { position: absolute; overflow: hidden; display: flex; flex-direction: column; background: #fff; }
.front { left: 27px; top: 0; width: calc(100% - 470px); }
.rear { left: 611px; top: 522px; right: 33px; font-size: 9px; line-height: 12px; }

/* remote session bar */
.rgs { height: 31px; background: #e5e5e8; border-top: 1px solid #f8f8f8; display: flex; align-items: flex-start; color: #777; font: 14px/14px "Open Sans", sans-serif; }
.rgs .logo { width: 9px; height: 16px; margin-right: 6px; }
.rgs strong { font: 500 18px/12px "Open Sans", sans-serif; color: #222; width: 57px; }
.rgs i { width: 1px; height: 22px; background: #c4c4c8; }
.rgs select { appearance: none; width: 69px; height: 17px; margin: 0 21px 0 20px; padding: 0 0 4px 27px; border: 1px solid #c4c4c8; border-top: 0; line-height: 12px; background: no-repeat 54px 4px/10px 6px url("data:image/svg+xml,%3Csvg xmlns='http://www.w3.org/2000/svg' viewBox='0 0 10 6'%3E%3Cpath d='M1 1l4 4 4-4' fill='none' stroke='%23444' stroke-width='2'/%3E%3C/svg%3E"); }
.rgs span { line-height: 12px; }
.rgs .rate { margin-left: 56px; width: 93px; }
.rgs .fps { width: 54px; }
.rgs button { margin-left: 29px; width: 26px; height: 20px; }
.rgs button + button { margin-left: 19px; }
.rgs svg { width: 100%; }
.flap { position: absolute; left: 341px; top: 31px; width: 82px; height: 22px; z-index: 1; }

/* application frame */
.app { position: relative; background: #444; height: 749px; overflow: hidden; }
.status { width: 100%; height: 13px; }
.shelf { display: flex; height: 67px; border-bottom: 2px solid #383838; }
.shelf-side { width: 28px; padding-left: 4px; }
.shelf-side svg { width: 20px; height: 62px; }
.shelf-main { flex: 1; min-width: 0; }
.shelf-tabs { display: flex; align-items: flex-end; height: 21px; border-bottom: 2px solid #363636; }
.shelf-tabs button { flex: 1 1 auto; height: 14px; border-right: 1px solid #333; border-top: 1px solid #3a3a3a; white-space: nowrap; }
.shelf-tabs .on, .rear-tabs .on, .ltabs .on, .dtabs .on { background: #666; border-radius: 2px 2px 0 0; }
.shelf-tabs .on { height: 17px; padding-top: 1px; }
.bin { width: 14px; height: 16px; margin: 0 1px 1px 5px; }
.shelf-box { margin-right: 1px; height: 38px; border: 1px solid #333; padding: 2px; }
.shelf-icons { width: 738px; display: flex; justify-content: space-between; }
.shelf-icons svg { width: 31px; height: 31px; }
.shelf-icons text { fill: #fff; font-family: "Liberation Sans", sans-serif; }
.t8 { font-size: 8px; font-weight: bold; }
.t12 { font-size: 12px; }
.t17 { font-size: 17px; }
.b { font-weight: bold; }

.work { display: grid; grid-template-columns: 28px 378px minmax(0, 1fr) 228px 14px; grid-template-rows: minmax(0, 1fr); height: 669px; }
.tools { display: flex; flex-direction: column; gap: 3px; padding-top: 14px; background: #444; border-right: 1px solid #333; overflow: hidden; }
.tools svg { width: 27px; height: 32px; border: 1px solid #2c2c2c; border-left: 0; border-top-color: #666; }
.tools .v { border: 0; height: 33px; }
.slot { height: 33px; margin: 36px 0 12px; border: 1px solid #333; border-left: 0; }
.menu { display: flex; align-items: center; }

.outliner { border-left: 6px solid #505050; border-right: 6px solid #404040; padding-left: 2px; }
.outliner .menu { height: 22px; padding-left: 6px; gap: 11px; }
.filter { display: flex; gap: 7px; height: 17px; }
.filter svg { width: 16px; height: 16px; }
.filter input { flex: 1; background: #2b2b2b; }
.treewrap { display: flex; background: #2d2d2d; margin-top: 6px; height: 624px; }
.tree { flex: 1; display: grid; grid-auto-rows: 1fr; height: 308px; }
.tree li { display: flex; align-items: center; padding-left: 17px; white-space: nowrap; }
.tree .ex { width: 11px; height: 11px; margin-right: 14px; }
.tree .ic { width: 16px; height: 16px; margin-right: 1px; }
.tree .dim { color: #666; }
.sel { background: #738db3; color: #fff; }
.vbar { width: 14px; margin-left: 2px; background: #5a5a5a; }
.vbar svg { width: 14px; height: 14px; border-bottom: 1px solid #333; background: #666; }

.view { display: flex; flex-direction: column; border-top: 1px solid #666; }
.view .menu { height: 19px; padding-left: 8px; gap: 12px; }
.iconrow { display: flex; align-items: center; gap: 3px; height: 19px; padding: 0 0 2px 2px; overflow: hidden; }
.iconrow svg { width: 16px; height: 16px; }
.sep { width: 9px; height: 12px; background: linear-gradient(#888, #888) no-repeat center/2px 12px; flex: none; }
.scene { flex: 1; min-height: 0; background: #a0a0a0; overflow: hidden; }
.scene svg { width: 100%; height: 630px; }

.channel { padding: 1px 3px 0 9px; display: flex; flex-direction: column; }
.channel > * { flex: none; }
.dock { display: flex; align-items: center; justify-content: flex-end; gap: 2px; height: 16px; font-size: 9px; white-space: nowrap; }
.grip { flex: none; width: 28px; height: 5px; margin: 0 10px; background: radial-gradient(#777 1px, transparent 1px) 0 0/4px 5px; }
.dock .grip + svg { margin-left: -6px; }
.dock svg { width: 12px; height: 12px; }
.modes { display: flex; justify-content: flex-end; gap: 4px; height: 22px; align-items: center; padding-right: 3px; }
.modes svg { width: 16px; height: 16px; }
.channel > .menu { height: 20px; padding: 1px 0 0 5px; gap: 13px; }
.attrs-box { background: #2d2d2d; border: 1px solid #666; outline: 1px solid #333; outline-offset: -2px; height: 403px; font-weight: bold; font-size: 12px; }
.attrs-box ul { background: #444; margin: 2px 2px 0; padding: 3px 1px 15px; display: grid; grid-auto-rows: 1fr; height: 79px; }
.attrs-box .in { padding-left: 9px; }
.attrs-box .hl { background: #3e3e3e; }
.divider { height: 14px; display: flex; align-items: center; justify-content: center; }
.divider .grip { width: 72px; }
.ltabs { display: flex; align-items: flex-end; height: 17px; }
.ltabs button { height: 14px; padding: 0 10px; border: 1px solid #333; border-bottom: 0; }
.ltabs .on { height: 16px; border: 0; }
.lpanel { border: 1px solid #333; padding: 0 3px; }
.lpanel .menu { height: 22px; padding-left: 4px; gap: 13px; }
.ltools { display: flex; justify-content: flex-end; gap: 7px; height: 21px; align-items: flex-start; padding-right: 2px; }
.ltools svg { width: 17px; height: 16px; }
.layers { background: #2d2d2d; margin-top: 2px; padding-top: 3px; display: grid; grid-auto-rows: 1fr; height: 138px; color: #ddd; }
.layers li { display: flex; align-items: center; gap: 3px; padding-left: 4px; white-space: nowrap; }
.layers button { width: 19px; height: 14px; border: 1px solid #222; border-radius: 2px; line-height: 12px; }
.layers svg { width: 15px; height: 17px; }
.layers .sel { color: #1c2636; }
.layers .sel button { border-color: #47607f; }

.vtabs { display: flex; flex-direction: column; }
.vtabs button { writing-mode: vertical-rl; height: 94px; border: 1px solid #333; border-right: 0; padding-top: 10px; text-align: left; line-height: 12px; white-space: nowrap; }
.vtabs button + button { height: 81px; }
.vtabs .on.on { height: 145px; background: #666; }

/* Add Attribute dialog */
.dialog { position: absolute; left: 494px; top: 297px; width: 498px; height: 470px; padding: 0 7px; border: 1px solid #2a3038; border-radius: 6px; background: linear-gradient(#a9b7cc 0, #b8c4d8 60px, #cfd4da 90px, #d8d8dc 152px, #7d8da6 153px); box-shadow: 0 0 14px 3px #0008, inset 0 0 0 1px #dfe8f2; }
.dialog-title { display: flex; align-items: flex-start; height: 26px; color: #222; font-size: 12px; }
.dialog-title > svg { width: 15px; height: 15px; margin: 5px 5px 0 0; }
.dialog-title span { margin-top: 5px; text-shadow: 0 0 4px #fff, 0 0 8px #fff; }
.smear { width: 18px; height: 15px; margin: 10px 0 0 84px; background: #4a5cc4; opacity: .5; filter: blur(3px); }
.smear.r { width: 10px; margin-left: 73px; background: #c0404c; }
.dialog-title button { width: 45px; height: 18px; margin-left: auto; display: grid; place-items: center; border: 1px solid #5a2a26; border-top: 0; border-radius: 0 0 4px 4px; background: linear-gradient(#d49a90 0, #c8695a 50%, #b03a26 51%, #d0694e); }
.dialog-title button svg { width: 9px; height: 9px; }
.dialog-body { height: 444px; background: #444; border: 1px solid #333; padding: 0 4px 0 3px; }
.dialog .menu { height: 20px; padding-left: 3px; }
.dtabs { display: flex; align-items: flex-end; height: 19px; }
.dtabs button { height: 16px; width: 56px; border: 1px solid #333; border-bottom: 0; }
.dtabs .on { width: 41px; height: 18px; border: 0; }
.dpanel { display: flex; gap: 3px; border: 1px solid #606060; border-bottom: 0; outline: 1px solid #333; outline-offset: -2px; height: 400px; padding: 2px 4px 0 3px; }
.form { position: relative; flex: 1; }
.names { display: grid; grid-template-columns: 136px 1fr; grid-template-rows: 18px 18px 18px 20px; column-gap: 3px; align-items: center; padding-top: 5px; }
.names > label, .names > span { text-align: right; }
input[type=text] { background: #2b2b2b; height: 16px; padding-left: 3px; border: 1px solid #383838; width: 100%; min-width: 0; }
.names input[type=text] { width: 228px; }
input[type=text]:disabled { background: none; border-color: #555; color: #5c5c5c; }
.filter input[type=text] { height: 17px; width: auto; }
input[type=checkbox], input[type=radio] { appearance: none; flex: none; background: #2d2d2d; width: 12px; height: 12px; }
input[type=radio] { width: 9px; height: 9px; border-radius: 50%; }
input[type=radio]:checked { background: #ddd; border: 1px solid #333; }
.off { color: #6c6c6c; }
.form label:has(input) { display: flex; align-items: center; gap: 7px; white-space: nowrap; }
.make { display: grid; grid-template-columns: 108px 108px 1fr; }
.form h2 { height: 20px; padding: 2px 5px; background: #505050; border: 1px solid #5c5c5c; border-bottom: 2px solid #333; font-size: 12px; line-height: 14px; }
.types, .attrtype, .nums { border: 1px solid #383838; border-top: 0; }
.types { height: 47px; padding: 0 6px; display: grid; grid-template-columns: 92px 96px 1fr; align-items: center; }
.attrtype { height: 44px; padding: 6px 6px 0; display: grid; grid-template: 20px 19px / 92px 1fr; align-items: center; }
.sc { padding-left: 9px; }
.init { grid-column: 2; }
.nums { height: 65px; padding: 1px 4px 0 3px; display: grid; grid-template-columns: 72px 1fr; grid-auto-rows: 1fr; align-items: center; column-gap: 3px; }
.nums input.marked { background: linear-gradient(#9db8e2, #9db8e2) no-repeat 3px 1px/13px 13px #2b2b2b; color: #fff; }
.nums input.active { border: 1px solid #5b7ba8; background: linear-gradient(#ccc, #ccc) no-repeat 10px 1px/1px 12px #2b2b2b; }
.enum { height: 80px; border-left: 1px solid #383838; padding: 0 4px 0 78px; }
.enum textarea { display: block; width: 100%; height: 80px; background: #2d2d2d; resize: none; }
.ibeam { position: absolute; left: 136px; top: 254px; width: 8px; height: 16px; }
.dbar { width: 14px; background: #383838; }
.dbar svg { width: 14px; height: 14px; background: #666; margin-bottom: 2px; }
.dbar span { display: block; height: 350px; background: #5a5a5a; }

/* lower edge of a capture */
.hscroll { height: 26px; background: linear-gradient(#e5e5e8 6px, #d0d0d4 7px, #ccc 14px, #e5e5e8 15px); padding: 6px 2px; position: relative; }
.hscroll span { display: block; height: 9px; width: 522px; border-radius: 5px; background: linear-gradient(#999, #858585); }
.banner { height: 20px; overflow: hidden; background: linear-gradient(118deg, #2c4f92 0 808px, #fff 809px); color: #111; }
.banner span { display: block; margin-left: 925px; font: 62px/57px "Liberation Serif", serif; white-space: nowrap; }

/* second capture */
.rear-title { height: 39px; background: #e5e5e8; display: flex; justify-content: flex-end; align-items: center; gap: 9px; padding: 0 3px 2px 0; }
.winbtn { width: 10px; height: 10px; }
.rear-body { display: flex; height: 619px; }
.rear-app { position: relative; flex: 1; background: #444; border-right: 3px solid #9cc0dc; overflow: hidden; }
.rear-status { width: 100%; height: 7px; }
.rear-shelf { height: 60px; }
.rear-tabs { display: flex; justify-content: flex-end; align-items: flex-end; height: 22px; border-bottom: 2px solid #363636; }
.rear-tabs button { height: 14px; padding: 0 8px; border-right: 1px solid #333; border-top: 1px solid #3a3a3a; }
.rear-tabs .on { height: 15px; }
.rear-tabs .bin { width: 12px; height: 14px; margin: 0 6px 2px 5px; }
.shelf-well { height: 30px; border: 1px solid #333; margin-right: 6px; }
.rear-main { display: grid; grid-template-columns: 22px 412px 20px minmax(0, 1fr) 142px 18px; grid-template-rows: minmax(0, 1fr); height: 552px; }
.rear-tools { display: flex; flex-direction: column; justify-content: flex-end; gap: 4px; padding-bottom: 93px; border-right: 3px solid #505050; overflow: hidden; }
.rear-tools svg { width: 22px; height: 26px; margin-left: -8px; }
.rear-tools .slot { height: 26px; width: 14px; margin: 0 0 8px; }
.rear-outliner { position: relative; display: flex; flex-direction: column; justify-content: flex-end; background: #2d2d2d; overflow: hidden; }
.small { flex: none; height: 365px; margin-bottom: -9px; }
.small li { padding-left: calc(13px + var(--d, 0) * 16px); }
.small .ic { width: 13px; height: 13px; margin-right: 1px; }
.small .ex { margin-right: 10px; }
.anc { background: #464e5e; }
.l1 { --d: 1; } .l2 { --d: 2; } .l6 { --d: 6; } .l7 { --d: 7; } .l8 { --d: 8; } .l9 { --d: 9; } .l10 { --d: 10; }
.l11 { --d: 11; } .l12 { --d: 12; } .l13 { --d: 13; } .l14 { --d: 14; } .l15 { --d: 15; } .l16 { --d: 16; }
.guides { position: absolute; left: 0; bottom: -9px; width: 412px; height: 365px; }
.rear-scroll { border-left: 2px solid #2d2d2d; background: linear-gradient(90deg, #555 11px, #3c3c3c 12px 16px, #888 17px); }
.mini { height: 20px; margin: 13px 42px 0 0; gap: 2px; justify-content: flex-end; }
.mini svg { width: 14px; height: 14px; }
.rear-channel { display: flex; flex-direction: column; padding: 0 4px 0 7px; min-width: 0; }
.rear-channel > * { flex: none; }
.rear-channel .dock { font-size: 8px; height: 14px; gap: 1px; }
.rear-channel .dock .grip { width: 24px; margin: 0 8px; }
.rear-channel .dock svg { width: 10px; height: 10px; }
.rear-channel .modes { height: 18px; gap: 3px; padding-right: 0; }
.rear-channel .modes svg { width: 13px; height: 13px; }
.rear-channel .menu { height: 17px; padding-left: 4px; gap: 11px; }
.chan-box { height: 332px; background: #2d2d2d; border-top: 1px solid #333; margin: 0 4px 0 -7px; }
.chan-box h3 { background: #444; height: 15px; padding-left: 8px; font-size: 10px; line-height: 16px; white-space: nowrap; }
.chan-box table { width: 100%; height: 103px; border-collapse: collapse; border-bottom: 14px solid #444; }
.chan-box th, .chan-box td { padding: 0 2px; line-height: 11px; height: 12px; }
.chan-box th { text-align: right; font-weight: normal; background: #444; white-space: nowrap; }
.chan-box td { width: 48px; border-bottom: 1px solid #444; padding-left: 1px; }
.rear-channel .divider { height: 11px; }
.rear-channel .ltabs { height: 16px; }
.rear-channel .ltabs button { height: 14px; padding: 0 7px; }
.rear-channel .layers-menu { padding: 0; }
.rear-channel .ltools { height: 20px; gap: 7px; padding: 2px 5px 0 0; }
.rear-channel .ltools svg { width: 14px; height: 13px; }
.rear-layers { background: #2d2d2d; color: #ddd; padding-top: 1px; margin-right: 4px; }
.rear-layers li { height: 16px; display: flex; align-items: center; gap: 1px; white-space: nowrap; padding-left: 1px; }
.rear-layers svg { width: 9px; height: 14px; }
.rear-layers .sel { color: #1c2636; }
.rear .vtabs button { height: 77px; padding-top: 8px; }
.rear .vtabs button + button { height: 68px; }
.rear .vtabs .on.on { height: 120px; }
.desk { width: 31px; background: linear-gradient(90deg, #16304f, #4a7dba 7px); }
.vscroll { width: 16px; background: #e5e5e8; display: flex; flex-direction: column; align-items: center; padding: 4px 0 2px; gap: 6px; }
.vscroll svg { width: 9px; height: 8px; }
.vscroll span { flex: 1; width: 6px; border-radius: 3px; background: linear-gradient(#ccc 34px, #888 35px 356px, #ccc 357px); }
.rear .hscroll { height: 22px; padding: 5px 0; background: linear-gradient(#e5e5e8 5px, #ccc 6px, #ccc 12px, #e5e5e8 13px); }
.rear .hscroll span { height: 7px; width: 425px; }
.rear .hscroll svg { position: absolute; right: 20px; top: 5px; width: 7px; height: 9px; }
.rear .banner { height: 19px; background: linear-gradient(118deg, #2c4f92 0 661px, #fff 662px); }
.rear .banner span { margin-left: 758px; font-size: 51px; line-height: 44px; }

/* Set Driven Key window */
.driven-window { position: absolute; left: 459px; right: 151px; top: 97px; height: 540px; border: 1px solid #2a3038; border-radius: 5px; padding: 0 5px; background: linear-gradient(#a2b0c8, #b4c2d8 23px, #8794a8 200px); box-shadow: inset 0 0 0 1px #dfe8f2, 0 0 4px #0008; }
.driven-title { display: flex; justify-content: flex-end; height: 22px; }
.driven-title button { width: 22px; height: 14px; border: 1px solid #66738a; border-top: 0; display: grid; place-items: center; background: #8f9db3; }
.driven-title .wide { width: 38px; }
.driven-title svg { width: 12px; height: 10px; }
.driven-body { height: 520px; background: #444; padding: 22px 7px 0 6px; }
.bar { height: 17px; background: #505050; border: 1px solid #5c5c5c; border-bottom-color: #333; padding-left: 3px; font-size: 10px; line-height: 15px; }
.pair { display: grid; grid-template-columns: 202px 1fr; border: 1px solid #383838; padding: 8px; }
.pair > * { background: #2d2d2d; border-right: 1px solid #484848; padding: 1px 0 0 2px; }
.pair > :first-child { padding-left: 1px; }
.driver { height: 233px; }
.driven { height: 230px; }
.driven .sel { height: 11px; line-height: 11px; }
.driven .attrs { display: grid; grid-auto-rows: 1fr; line-height: 10px; padding-bottom: 108px; }
.pointer { position: absolute; left: 192px; top: 516px; width: 8px; height: 8px; }
```
